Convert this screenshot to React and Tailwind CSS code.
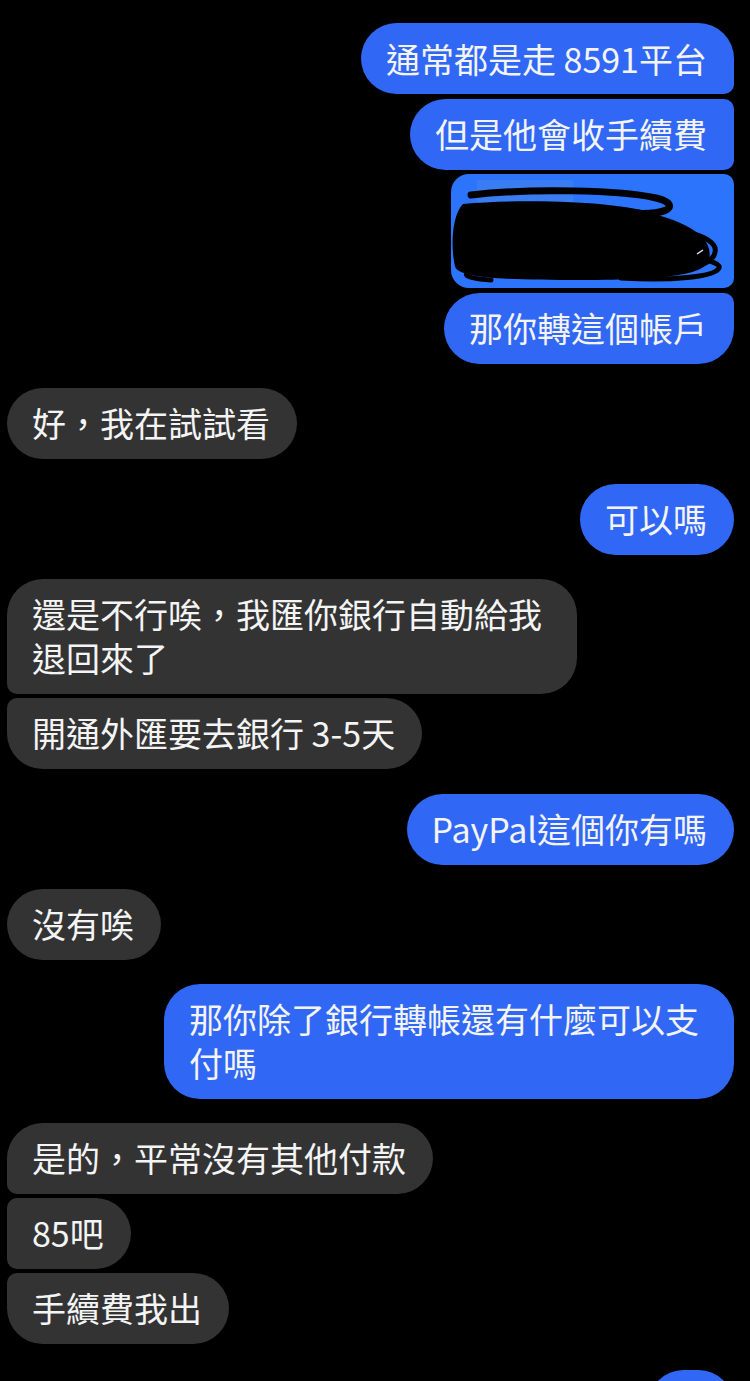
// Chat screenshot – dark theme message thread
const FONT = { fontFamily: '"Noto Sans CJK TC", "Noto Sans", sans-serif' };

const Bubble = ({ mine, corners = '', children }) => (
  <div
    className={`max-w-[570px] pl-[25px] pr-[27px] py-[13.5px] text-[34px] leading-[44px] text-[#f4f4f4] ${
      mine ? 'bg-[#3068f5]' : 'bg-[#333334]'
    } ${corners}`}
  >
    {children}
  </div>
);

const RedactedImage = () => (
  <div className="w-[283px] h-[114px] overflow-hidden rounded-l-[18px] rounded-r-[10px] bg-[#2b74fb]">
    <svg viewBox="0 0 283 114" className="w-full h-full">
      <rect x="26" y="6" width="96" height="24" fill="#3a7cf2" />
      <path
        d="M12 30 C80 24 180 28 210 42 C250 54 262 70 258 86 C254 100 220 106 130 106 C50 106 6 104 4 92 C0 76 0 42 12 30 Z"
        fill="#000"
      />
      <g fill="none" stroke="#000" strokeLinecap="round">
        <path d="M20 21 C80 14 170 16 205 24 C230 30 220 42 180 39" strokeWidth="7" />
        <path d="M150 48 C222 50 268 62 264 78 C262 92 232 98 200 96" strokeWidth="5" />
        <path d="M120 72 C200 74 272 84 268 94 C264 103 220 107 170 104" strokeWidth="5" />
        <path d="M40 42 C10 46 2 58 22 64 C2 70 0 84 18 88" strokeWidth="6" />
        <path d="M60 34 C20 36 8 48 30 52" strokeWidth="5" />
        <path d="M30 96 C10 98 8 104 40 106" strokeWidth="5" />
      </g>
      <path d="M246 80 L252 76" stroke="#dfe8ff" strokeWidth="1.5" />
    </svg>
  </div>
);

export default function App() {
  return (
    <div className="min-h-[1381px] bg-black overflow-hidden" style={FONT}>
      <div className="flex flex-col pt-[23px] pl-[7px] pr-[16px]">
        {/* ── my messages ── */}
        <div className="flex flex-col items-end gap-[4.5px]">
          <Bubble mine corners="rounded-[36px] rounded-br-[10px]">通常都是走 8591平台</Bubble>
          <Bubble mine corners="rounded-l-[36px] rounded-r-[10px]">但是他會收手續費</Bubble>
          <RedactedImage />
          <Bubble mine corners="rounded-l-[36px] rounded-tr-[10px] rounded-br-[36px]">那你轉這個帳戶</Bubble>
        </div>

        <div className="flex flex-col items-start mt-[24px]">
          <Bubble corners="rounded-[36px]">好，我在試試看</Bubble>
        </div>

        <div className="flex flex-col items-end mt-[25px]">
          <Bubble mine corners="rounded-[36px]">可以嗎</Bubble>
        </div>

        <div className="flex flex-col items-start gap-[4px] mt-[24px]">
          <Bubble corners="rounded-[36px] rounded-bl-[10px]">還是不行唉，我匯你銀行自動給我退回來了</Bubble>
          <Bubble corners="rounded-[36px] rounded-tl-[10px]">開通外匯要去銀行 3-5天</Bubble>
        </div>

        <div className="flex flex-col items-end mt-[25px]">
          <Bubble mine corners="rounded-[36px]">PayPal這個你有嗎</Bubble>
        </div>

        <div className="flex flex-col items-start mt-[24px]">
          <Bubble corners="rounded-[36px]">沒有唉</Bubble>
        </div>

        <div className="flex flex-col items-end mt-[24px]">
          <Bubble mine corners="rounded-[36px]">那你除了銀行轉帳還有什麼可以支付嗎</Bubble>
        </div>

        <div className="flex flex-col items-start gap-[4px] mt-[24px]">
          <Bubble corners="rounded-[36px] rounded-bl-[10px]">是的，平常沒有其他付款</Bubble>
          <Bubble corners="rounded-r-[36px] rounded-l-[10px]">85吧</Bubble>
          <Bubble corners="rounded-[36px] rounded-tl-[10px]">手續費我出</Bubble>
        </div>

        {/* next message, only its top edge is on screen */}
        <div className="flex flex-col items-end mt-[26px]">
          <div className="w-[86px] h-[71px] rounded-[36px] bg-[#3068f5]" />
        </div>
      </div>
    </div>
  );
}
